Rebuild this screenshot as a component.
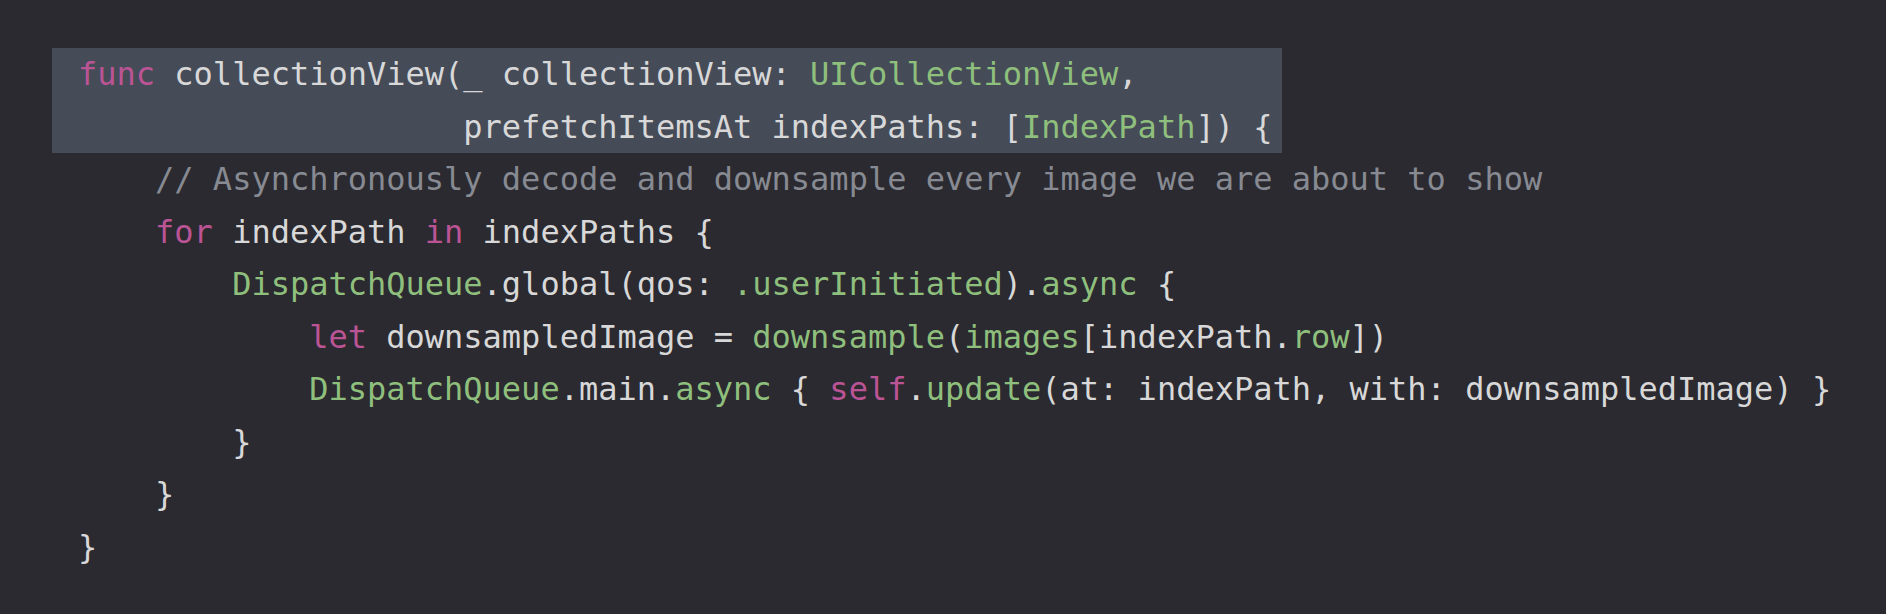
import React from "react";

type Tok = [string, string];

const K = "text-[#bb5495]";
const G = "text-[#8fbf7c]";
const P = "text-[#d8d8d8]";
const C = "text-[#878a92]";

const Line = ({ toks }: { toks: Tok[] }) => (
  <div className="h-[52.5px] leading-[52.5px] whitespace-pre">
    {toks.map((t, i) => (
      <span key={i} className={t[0]}>
        {t[1]}
      </span>
    ))}
  </div>
);

const header: Tok[][] = [
  [
    [K, "func"],
    [P, " collectionView(_ collectionView: "],
    [G, "UICollectionView"],
    [P, ","],
  ],
  [
    [P, "                    prefetchItemsAt indexPaths: ["],
    [G, "IndexPath"],
    [P, "]) {"],
  ],
];

const body: Tok[][] = [
  [[C, "    // Asynchronously decode and downsample every image we are about to show"]],
  [
    [K, "    for"],
    [P, " indexPath "],
    [K, "in"],
    [P, " indexPaths {"],
  ],
  [
    [G, "        DispatchQueue"],
    [P, ".global(qos: "],
    [G, ".userInitiated"],
    [P, ")."],
    [G, "async"],
    [P, " {"],
  ],
  [
    [K, "            let"],
    [P, " downsampledImage = "],
    [G, "downsample"],
    [P, "("],
    [G, "images"],
    [P, "[indexPath."],
    [G, "row"],
    [P, "])"],
  ],
  [
    [G, "            DispatchQueue"],
    [P, ".main."],
    [G, "async"],
    [P, " { "],
    [K, "self"],
    [P, "."],
    [G, "update"],
    [P, "(at: indexPath, with: downsampledImage) }"],
  ],
  [[P, "        }"]],
  [[P, "    }"]],
  [[P, "}"]],
];

export default function App() {
  return (
    <div
      className="w-[1886px] h-[614px] bg-[#2b2a30] pt-[48px] text-[32px] overflow-hidden"
      style={{ fontFamily: '"DejaVu Sans Mono", "Liberation Mono", monospace' }}
    >
      <div className="ml-[52px] w-[1230px] pl-[26px] bg-[#454c58]">
        {header.map((l, i) => (
          <Line key={i} toks={l} />
        ))}
      </div>
      <div className="pl-[78px]">
        {body.map((l, i) => (
          <Line key={i} toks={l} />
        ))}
      </div>
    </div>
  );
}
